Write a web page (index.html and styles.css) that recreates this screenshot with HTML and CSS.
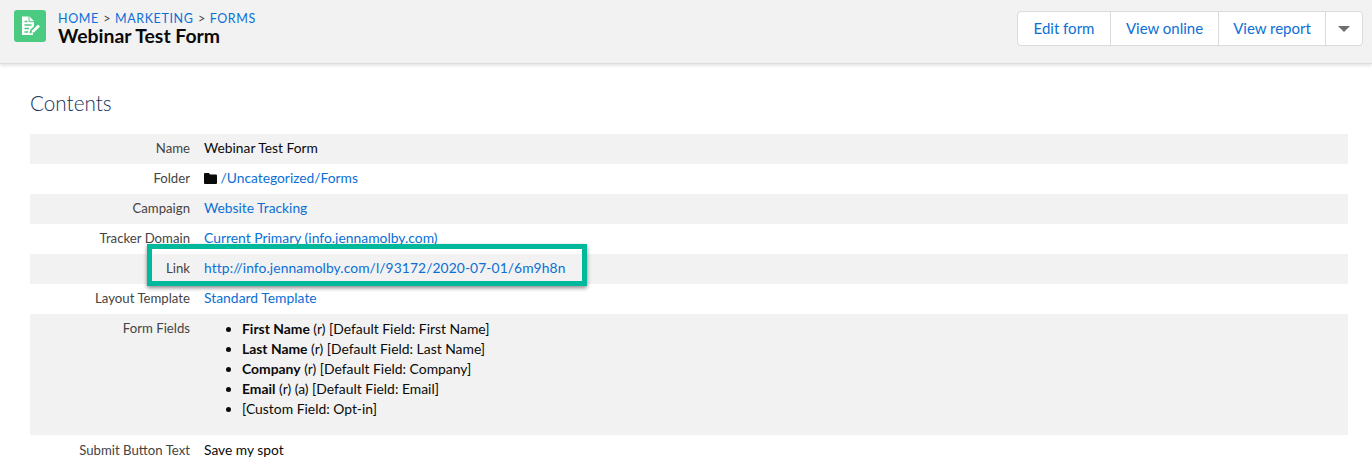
FILE: index.html
```html
<!DOCTYPE html>
<html lang="en">
<head>
<meta charset="utf-8">
<title>Webinar Test Form</title>
<link rel="stylesheet" href="styles.css">
</head>
<body>
<header class="page-header">
  <div class="title-group">
    <span class="app-icon">
      <svg width="32" height="32" viewBox="0 0 32 32" aria-hidden="true">
        <path d="M8 6.500h7.500L20 11v5.200l-3.600 3.600-1 3.400 2.200.1 1.100-.3h.3v2H8z" fill="#fff"/>
        <path d="M15 6.500v5.200h5" fill="none" stroke="#4bca81" stroke-width="1"/>
        <path d="M10.500 11.500h3M10.500 15h7M10.500 18.500h4.500M10.500 22h3.500" stroke="#4bca81" stroke-width="1.500" fill="none"/>
        <path d="M17.400 23l.8-2.800 5.800-5.800 2 2-5.800 5.800z" fill="#fff"/>
      </svg>
    </span>
    <div class="title-text">
      <nav class="crumbs"><a href="#">HOME</a><span class="sep">&gt;</span><a href="#">MARKETING</a><span class="sep">&gt;</span><a href="#">FORMS</a></nav>
      <h1 class="page-title">Webinar Test Form</h1>
    </div>
  </div>
  <div class="btn-group">
    <a class="btn btn-edit" href="#">Edit form</a>
    <a class="btn btn-view" href="#">View online</a>
    <a class="btn btn-report" href="#">View report</a>
    <span class="btn btn-caret"><span class="caret"></span></span>
  </div>
</header>
<main class="content">
  <h2 class="section-title">Contents</h2>
  <div class="details">
    <div class="row alt"><div class="label">Name</div><div class="value">Webinar Test Form</div></div>
    <div class="row"><div class="label">Folder</div><div class="value">
      <svg class="folder" width="13" height="11" viewBox="0 0 13 11" aria-hidden="true"><path d="M1.200 0h3.600l1.300 1.600h5.700c.7 0 1.200.5 1.200 1.200v6.900c0 .7-.5 1.300-1.200 1.300H1.200C.5 11 0 10.400 0 9.700V1.200C0 .5.500 0 1.200 0z" fill="#0a0a0a"/></svg>
      <a href="#">/Uncategorized/Forms</a></div></div>
    <div class="row alt"><div class="label">Campaign</div><div class="value"><a href="#">Website Tracking</a></div></div>
    <div class="row"><div class="label">Tracker Domain</div><div class="value value-wide"><a href="#">Current Primary (info.jennamolby.com)</a></div></div>
    <div class="row alt row-link">
      <div class="label">Link</div><div class="value value-url"><a href="#">http://info.jennamolby.com/l/93172/2020-07-01/6m9h8n</a></div>
      <span class="highlight"></span>
    </div>
    <div class="row"><div class="label">Layout Template</div><div class="value value-wide"><a href="#">Standard Template</a></div></div>
    <div class="row alt row-fields"><div class="label">Form Fields</div><div class="value value-wide">
      <ul class="fields">
        <li><strong>First Name</strong> (r) [Default Field: First Name]</li>
        <li><strong>Last Name</strong> (r) [Default Field: Last Name]</li>
        <li><strong>Company</strong> (r) [Default Field: Company]</li>
        <li><strong>Email</strong> (r) (a) [Default Field: Email]</li>
        <li>[Custom Field: Opt-in]</li>
      </ul></div></div>
    <div class="row row-last"><div class="label">Submit Button Text</div><div class="value">Save my spot</div></div>
  </div>
</main>
</body>
</html>
```

FILE: styles.css
```css
* { box-sizing: border-box; }
html, body { margin: 0; padding: 0; height: 464px; overflow: hidden; }
body { background: #fff; color: #0a0a0a; font-family: "Lato", "Open Sans", sans-serif; font-size: 14px; }
a { color: #0b6fd6; text-decoration: none; }
.page-header { height: 64px; background: #f2f2f2; border-bottom: 1px solid #dcdcdc; box-shadow: 0 2px 3px rgba(0,0,0,.1); display: flex; justify-content: space-between; padding: 10px 9px 0 14px; }
.title-group { display: flex; gap: 12px; align-items: flex-start; }
.app-icon { width: 32px; height: 32px; background: #4bca81; border-radius: 3px; display: block; }
.app-icon svg { display: block; }
.crumbs { font-size: 12.500px; line-height: 18px; letter-spacing: .6px; height: 16px; }
.crumbs .sep { margin: 0 4.500px; color: #444; letter-spacing: 0; }
.page-title { margin: 0; font-size: 19.400px; line-height: 20px; font-weight: 700; color: #0a0a0a; }
.btn-group { display: flex; height: 35px; margin-top: 1px; background: #fff; border: 1px solid #dddbda; border-radius: 4px; }
.btn { display: flex; align-items: center; justify-content: center; font-size: 15px; border-left: 1px solid #dddbda; padding-bottom: 1px; }
.btn-edit { width: 92px; border-left: 0; }
.btn-view { width: 108px; }
.btn-report { width: 107px; }
.btn-caret { width: 37px; padding-bottom: 0; }
.caret { width: 0; height: 0; border-left: 6px solid transparent; border-right: 6px solid transparent; border-top: 6px solid #706e6b; }
.content { padding: 25px 24px 0 30px; }
.section-title { margin: 0 0 17px; font-size: 20.700px; line-height: 28px; font-weight: 300; color: #16325c; }
.row { display: flex; min-height: 30px; line-height: 20px; padding: 4px 0; position: relative; }
.row-last { padding-top: 5px; }
.alt { background: #f2f2f2; }
.label { width: 160px; text-align: right; color: #444; flex: none; font-size: 13.200px; }
.value { margin-left: 14px; font-size: 13.800px; }
.value-wide { font-size: 13.900px; }
.value-url { letter-spacing: .1px; }
.folder { vertical-align: -1px; }
.row-fields { height: 121px; }
.fields { margin: 0; padding: 1px 0 0 38px; }
.highlight { position: absolute; left: 117px; top: -10px; width: 440px; height: 42px; border: 5px solid #00b89c; box-shadow: 0 2px 4px rgba(0,0,0,.45); }
```
